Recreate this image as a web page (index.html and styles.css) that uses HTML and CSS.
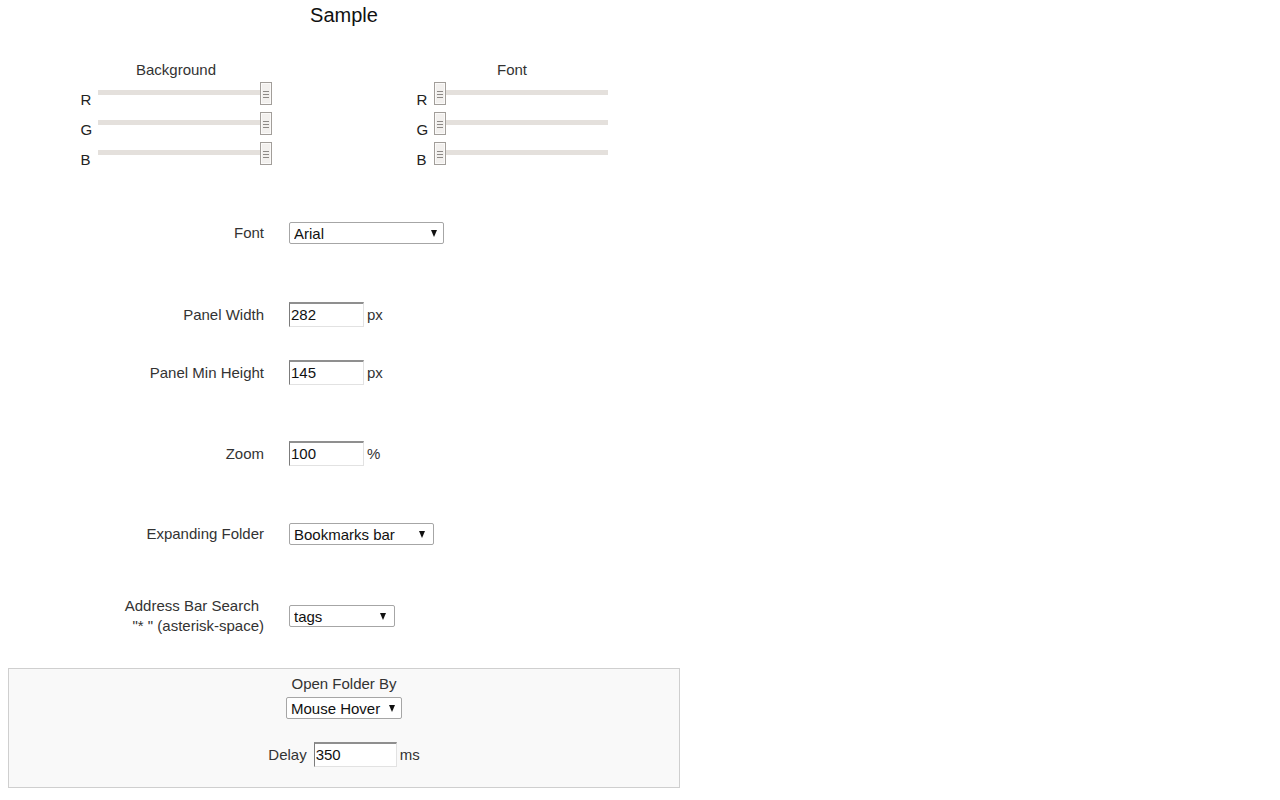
FILE: index.html
```html
<!DOCTYPE html>
<html>
<head>
<meta charset="utf-8">
<title>Options</title>
<link rel="stylesheet" href="styles.css">
</head>
<body>
<div class="page">
  <div class="title">Sample</div>

  <div class="colors">
    <div class="col">
      <div class="col-head">Background</div>
      <div class="slider-row"><span class="letter">R</span><span class="slider max"><span class="handle"></span></span></div>
      <div class="slider-row"><span class="letter">G</span><span class="slider max"><span class="handle"></span></span></div>
      <div class="slider-row"><span class="letter">B</span><span class="slider max"><span class="handle"></span></span></div>
    </div>
    <div class="col">
      <div class="col-head">Font</div>
      <div class="slider-row"><span class="letter">R</span><span class="slider min"><span class="handle"></span></span></div>
      <div class="slider-row"><span class="letter">G</span><span class="slider min"><span class="handle"></span></span></div>
      <div class="slider-row"><span class="letter">B</span><span class="slider min"><span class="handle"></span></span></div>
    </div>
  </div>

  <div class="form-row row-font">
    <div class="label">Font</div>
    <span class="select w-font"><select><option>Arial</option></select></span>
  </div>

  <div class="form-row row-width">
    <div class="label">Panel Width</div>
    <input class="num" type="text" value="282"><span class="unit">px</span>
  </div>

  <div class="form-row row-height">
    <div class="label">Panel Min Height</div>
    <input class="num" type="text" value="145"><span class="unit">px</span>
  </div>

  <div class="form-row row-zoom">
    <div class="label">Zoom</div>
    <input class="num" type="text" value="100"><span class="unit">%</span>
  </div>

  <div class="form-row row-expand">
    <div class="label">Expanding Folder</div>
    <span class="select w-expand"><select><option>Bookmarks bar</option></select></span>
  </div>

  <div class="form-row row-search">
    <div class="label two-line"><span class="line1">Address Bar Search</span><span class="line2">"* " (asterisk-space)</span></div>
    <span class="select w-tags"><select><option>tags</option></select></span>
  </div>

  <div class="box">
    <div class="box-head">Open Folder By</div>
    <div class="box-select"><span class="select w-hover"><select><option>Mouse Hover</option></select></span></div>
    <div class="delay-row">
      <span class="delay-label">Delay</span><input class="num delay" type="text" value="350"><span class="unit">ms</span>
    </div>
  </div>
</div>
</body>
</html>
```

FILE: styles.css
```css
body {
  margin: 0;
  background: #fff;
  font-family: "Liberation Sans", Arial, sans-serif;
  font-size: 15px;
  color: #333;
}

.page {
  width: 672px;
  margin-left: 8px;
}

.title {
  text-align: center;
  font-size: 20px;
  line-height: 24px;
  padding-top: 3px;
  color: #111;
}

.colors {
  display: grid;
  grid-template-columns: 1fr 1fr;
  margin-top: 34px;
}

.col {
  display: flex;
  flex-direction: column;
  align-items: center;
}

.col-head {
  line-height: 18px;
  margin-bottom: 3px;
}

.slider-row {
  display: flex;
  align-items: flex-start;
  width: 191px;
  height: 30px;
}

.letter {
  width: 17px;
  margin-top: 9px;
  line-height: 18px;
  color: #222;
}

.slider {
  position: relative;
  width: 174px;
  height: 23px;
}

.slider::before {
  content: "";
  position: absolute;
  left: 0;
  right: 0;
  top: 8px;
  height: 5px;
  background: #e4e0dc;
}

.handle {
  position: absolute;
  top: 0;
  width: 12px;
  height: 23px;
  box-sizing: border-box;
  border: 1px solid #a29e9a;
  background: #f2f0ee;
  box-shadow: inset 0 0 0 1px #fbfaf9;
}

.slider.max .handle { right: 0; }
.slider.min .handle { left: 0; }

.handle::after {
  content: "";
  position: absolute;
  left: 2px;
  top: 8px;
  width: 6px;
  height: 7px;
  background: repeating-linear-gradient(to bottom, #8e8a87 0 1px, transparent 1px 3px);
}

.form-row {
  display: flex;
  align-items: center;
}

.label {
  width: 256px;
  margin-right: 25px;
  text-align: right;
  line-height: 18px;
}

.two-line {
  line-height: 20px;
}

.two-line span {
  display: block;
}

.two-line .line1 {
  margin-right: 5px;
}

.row-font { margin-top: 50px; }
.row-width { margin-top: 58px; }
.row-height { margin-top: 33px; }
.row-zoom { margin-top: 56px; }
.row-expand { margin-top: 57px; }
.row-search { margin-top: 51px; }

.select {
  position: relative;
  display: inline-block;
}

.select select {
  appearance: none;
  -webkit-appearance: none;
  display: block;
  box-sizing: border-box;
  height: 22px;
  margin: 0;
  padding: 0 0 0 4px;
  border: 1px solid #a6a6a6;
  border-radius: 2px;
  background: #fff;
  font-family: "Liberation Sans", Arial, sans-serif;
  font-size: 15px;
  color: #111;
  outline: none;
}

.select::after {
  content: "";
  position: absolute;
  top: 8px;
  width: 0;
  height: 0;
  border-left: 3.5px solid transparent;
  border-right: 3.5px solid transparent;
  border-top: 7px solid #111;
  pointer-events: none;
}

.w-font select { width: 155px; }
.w-font::after { right: 7px; }
.w-expand select { width: 145px; }
.w-expand::after { right: 9px; }
.w-tags select { width: 106px; }
.w-tags::after { right: 9px; }
.w-hover select { width: 116px; }
.w-hover::after { right: 7px; }

.num {
  box-sizing: border-box;
  width: 75px;
  height: 25px;
  margin: 0;
  padding: 0 0 1px 1px;
  border-style: solid;
  border-width: 2px 1px 1px 1px;
  border-color: #8f8f8f #e2e2e2 #e2e2e2 #7c7c7c;
  background: #fff;
  font-family: "Liberation Sans", Arial, sans-serif;
  font-size: 15px;
  color: #111;
  outline: none;
}

.unit {
  margin-left: 3px;
  line-height: 18px;
}

.box {
  box-sizing: border-box;
  width: 672px;
  margin-top: 32px;
  padding: 6px 0 20px;
  border: 1px solid #cfcfcf;
  background: #f9f9f9;
  text-align: center;
}

.box-head {
  line-height: 18px;
}

.box-select {
  display: flex;
  justify-content: center;
  margin-top: 4px;
}

.delay-row {
  display: flex;
  justify-content: center;
  align-items: center;
  margin-top: 23px;
}

.delay-label {
  margin-right: 7px;
  line-height: 18px;
}

.num.delay {
  width: 83px;
}
```
